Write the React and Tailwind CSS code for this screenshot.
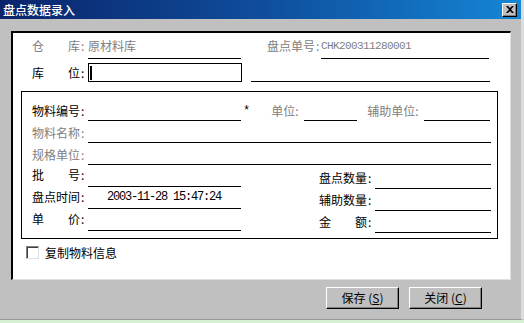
import React from "react";

const CJK = "font-['SimSun','Noto_Sans_CJK_SC',sans-serif]";

function Label({ text, gray, w = "w-[56px]", mt = "" }) {
  const chars = text.split("");
  return (
    <div className={`flex ${w} ${mt} shrink-0 leading-[16px] ${gray ? "text-[#808080]" : "text-black"}`}>
      <div className="flex w-[48px] justify-between">
        {chars.map((c, i) => (
          <span key={i}>{c}</span>
        ))}
      </div>
      <span className="ml-[1px]">:</span>
    </div>
  );
}

function Field({ w, children }) {
  return (
    <div className={`${w} h-[22px] shrink-0 border-b border-black leading-[16px]`}>{children}</div>
  );
}

function Row({ children, h = "h-[22px]" }) {
  return <div className={`flex items-start ${h}`}>{children}</div>;
}

const btn =
  "w-[73px] h-[22px] bg-[#c0c0c0] border border-t-white border-l-white border-r-black border-b-black shadow-[inset_-1px_-1px_0_#808080] flex items-center justify-center leading-[16px]";

export default function App() {
  return (
    <div className={`w-[524px] h-[323px] bg-[#d6f0d6] text-[12px] ${CJK}`}>
      <div className="w-[524px] h-[320px] bg-[#c0c0c0] flex flex-col border-b border-[#9a9a9a] border-r-[3px] border-r-[#dcdcdc]">
        {/* Title bar */}
        <div className="h-[19px] flex items-center justify-between pl-[3px] pr-[4px] bg-linear-to-r from-[#0a246a] via-[#0f4d9c] to-[#1586d6]">
          <span className="text-white font-medium leading-[16px]">盘点数据录入</span>
          <div className="w-[15px] h-[14px] bg-[#c0c0c0] border border-t-white border-l-white border-r-black border-b-black shadow-[inset_-1px_-1px_0_#808080] flex items-center justify-center">
            <svg width="8" height="7" viewBox="0 0 8 7">
              <path d="M0 0 L2 0 L4 2 L6 0 L8 0 L5 3.5 L8 7 L6 7 L4 5 L2 7 L0 7 L3 3.5 Z" fill="black" />
            </svg>
          </div>
        </div>

        {/* White panel */}
        <div className="mt-[12px] ml-[11px] w-[500px] h-[249px] bg-white border-t-2 border-l-2 border-t-black border-l-black border-r border-b border-r-[#e0e0e0] border-b-[#e0e0e0] flex flex-col">
          <div className="pt-[5px] pl-[19px]">
            <div className="flex items-start h-[21px]">
              <Label text="仓库" gray />
              <div className="w-[153px] h-[21px] border-b border-black text-[#808080] leading-[16px]">原材料库</div>
              <div className="ml-[26px] flex items-start">
                <Label text="盘点单号" gray w="w-[54px]" />
                <div className="w-[168px] h-[21px] border-b border-black text-[#808080] leading-[16px] font-['Liberation_Mono',monospace] text-[11px] tracking-[-0.6px]">
                  CHK200311280001
                </div>
              </div>
            </div>
            <div className="flex items-center h-[19px] mt-[4px]">
              <Label text="库位" />
              <div className="w-[154px] h-[19px] border border-black flex items-center pl-[1px]">
                <div className="w-[2px] h-[14px] bg-black" />
              </div>
              <div className="ml-[9px] w-[239px] h-[19px] border-b border-black" />
            </div>
          </div>

          {/* Inner box */}
          <div className="mt-[9px] ml-[8px] w-[477px] h-[148px] border border-black pt-[7px] pl-[10px]">
            <Row>
              <Label text="物料编号" mt="mt-[4px]" />
              <Field w="w-[153px]" />
              <span className="ml-[2px] mt-[4px] leading-[16px] font-['Liberation_Mono',monospace]">*</span>
              <div className="ml-[21px] mt-[4px] w-[33px] text-[#808080] leading-[16px]">单位:</div>
              <Field w="w-[53px]" />
              <div className="ml-[10px] mt-[4px] w-[57px] text-[#808080] leading-[16px]">辅助单位:</div>
              <Field w="w-[66px]" />
            </Row>
            <Row>
              <Label text="物料名称" gray mt="mt-[4px]" />
              <Field w="w-[403px]" />
            </Row>
            <Row>
              <Label text="规格单位" gray mt="mt-[4px]" />
              <Field w="w-[403px]" />
            </Row>
            <div className="flex">
              <div className="flex flex-col">
                <Row>
                  <Label text="批号" mt="mt-[2px]" />
                  <Field w="w-[153px]" />
                </Row>
                <Row>
                  <Label text="盘点时间" mt="mt-[2px]" />
                  <Field w="w-[153px]">
                    <div className="mt-[2px] ml-[19px] font-['Liberation_Mono',monospace] text-[12px] tracking-[-1.2px]">
                      2003-11-28 15:47:24
                    </div>
                  </Field>
                </Row>
                <Row>
                  <Label text="单价" mt="mt-[2px]" />
                  <Field w="w-[153px]" />
                </Row>
              </div>
              <div className="flex flex-col ml-[78px] pt-[2px]">
                <Row>
                  <Label text="盘点数量" mt="mt-[3px]" />
                  <Field w="w-[116px]" />
                </Row>
                <Row>
                  <Label text="辅助数量" mt="mt-[3px]" />
                  <Field w="w-[116px]" />
                </Row>
                <Row>
                  <Label text="金额" mt="mt-[3px]" />
                  <Field w="w-[116px]" />
                </Row>
              </div>
            </div>
          </div>

          {/* Checkbox */}
          <div className="mt-[7px] ml-[13px] flex items-center h-[13px]">
            <div className="w-[13px] h-[13px] bg-white border border-t-[#808080] border-l-[#808080] border-r-[#e0e0e0] border-b-[#e0e0e0] shadow-[inset_1px_1px_0_#404040]" />
            <span className="ml-[6px] leading-[16px]">复制物料信息</span>
          </div>
        </div>

        {/* Buttons */}
        <div className="mt-[7px] ml-[326px] flex gap-[10px]">
          <button className={btn}>
            保存 (<u>S</u>)
          </button>
          <button className={btn}>
            关闭 (<u>C</u>)
          </button>
        </div>
      </div>
    </div>
  );
}
